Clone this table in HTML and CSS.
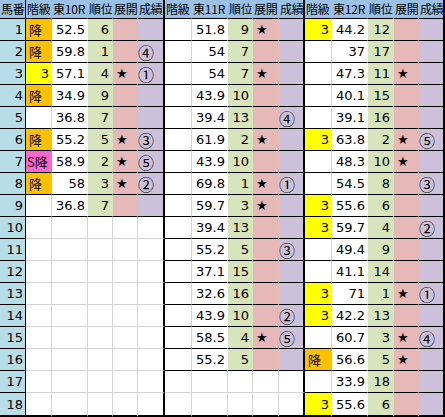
FILE: index.html
```html
<!DOCTYPE html>
<html lang="ja">
<head>
<meta charset="utf-8">
<title>馬番表</title>
<link rel="stylesheet" href="styles.css">
</head>
<body>
<table class="sheet">
<colgroup>
<col class="w-no">
<col class="w26"><col class="w36"><col class="w25"><col class="w25"><col class="w27">
<col class="w27"><col class="w36"><col class="w25"><col class="w26"><col class="w26">
<col class="w27"><col class="w36"><col class="w26"><col class="w25"><col class="w26">
</colgroup>
<thead>
<tr>
<th class="no">馬番</th>
<th>階級</th><th>東10R</th><th>順位</th><th>展開</th><th class="end">成績</th>
<th>階級</th><th>東11R</th><th>順位</th><th>展開</th><th class="end">成績</th>
<th>階級</th><th>東12R</th><th>順位</th><th>展開</th><th class="end">成績</th>
</tr>
</thead>
<tbody>
<tr>
<td class="no">1</td>
<td class="k x fo">降</td><td class="t x">52.5</td><td class="r">6</td><td class="d"></td><td class="s"></td>
<td class="k x"></td><td class="t x">51.8</td><td class="r">9</td><td class="d">★</td><td class="s"></td>
<td class="k x fy">3</td><td class="t x">44.2</td><td class="r">12</td><td class="d"></td><td class="s"></td>
</tr>
<tr>
<td class="no">2</td>
<td class="k x fo">降</td><td class="t x">59.8</td><td class="r">1</td><td class="d"></td><td class="s">④</td>
<td class="k x"></td><td class="t x">54</td><td class="r">7</td><td class="d"></td><td class="s"></td>
<td class="k x"></td><td class="t x">37</td><td class="r">17</td><td class="d"></td><td class="s"></td>
</tr>
<tr>
<td class="no">3</td>
<td class="k x fy">3</td><td class="t x">57.1</td><td class="r">4</td><td class="d">★</td><td class="s">①</td>
<td class="k x"></td><td class="t x">54</td><td class="r">7</td><td class="d">★</td><td class="s"></td>
<td class="k x"></td><td class="t x">47.3</td><td class="r">11</td><td class="d">★</td><td class="s"></td>
</tr>
<tr>
<td class="no">4</td>
<td class="k x fo">降</td><td class="t x">34.9</td><td class="r">9</td><td class="d"></td><td class="s"></td>
<td class="k x"></td><td class="t x">43.9</td><td class="r">10</td><td class="d"></td><td class="s"></td>
<td class="k x"></td><td class="t x">40.1</td><td class="r">15</td><td class="d"></td><td class="s"></td>
</tr>
<tr>
<td class="no">5</td>
<td class="k x"></td><td class="t x">36.8</td><td class="r">7</td><td class="d"></td><td class="s"></td>
<td class="k x"></td><td class="t x">39.4</td><td class="r">13</td><td class="d"></td><td class="s">④</td>
<td class="k x"></td><td class="t x">39.1</td><td class="r">16</td><td class="d"></td><td class="s"></td>
</tr>
<tr>
<td class="no">6</td>
<td class="k x fo">降</td><td class="t x">55.2</td><td class="r">5</td><td class="d">★</td><td class="s">③</td>
<td class="k x"></td><td class="t x">61.9</td><td class="r">2</td><td class="d">★</td><td class="s"></td>
<td class="k x fy">3</td><td class="t x">63.8</td><td class="r">2</td><td class="d">★</td><td class="s">⑤</td>
</tr>
<tr>
<td class="no">7</td>
<td class="k x fp">S降</td><td class="t x">58.9</td><td class="r">2</td><td class="d">★</td><td class="s">⑤</td>
<td class="k x"></td><td class="t x">43.9</td><td class="r">10</td><td class="d"></td><td class="s"></td>
<td class="k x"></td><td class="t x">48.3</td><td class="r">10</td><td class="d">★</td><td class="s"></td>
</tr>
<tr>
<td class="no">8</td>
<td class="k x fo">降</td><td class="t x">58</td><td class="r">3</td><td class="d">★</td><td class="s">②</td>
<td class="k x"></td><td class="t x">69.8</td><td class="r">1</td><td class="d">★</td><td class="s">①</td>
<td class="k x"></td><td class="t x">54.5</td><td class="r">8</td><td class="d"></td><td class="s">③</td>
</tr>
<tr>
<td class="no">9</td>
<td class="k x"></td><td class="t x">36.8</td><td class="r">7</td><td class="d"></td><td class="s"></td>
<td class="k x"></td><td class="t x">59.7</td><td class="r">3</td><td class="d">★</td><td class="s"></td>
<td class="k x fy">3</td><td class="t x">55.6</td><td class="r">6</td><td class="d"></td><td class="s"></td>
</tr>
<tr>
<td class="no">10</td>
<td></td><td></td><td></td><td></td><td class="end"></td>
<td class="k x"></td><td class="t x">39.4</td><td class="r">13</td><td class="d"></td><td class="s"></td>
<td class="k x fy">3</td><td class="t x">59.7</td><td class="r">4</td><td class="d"></td><td class="s">②</td>
</tr>
<tr>
<td class="no">11</td>
<td></td><td></td><td></td><td></td><td class="end"></td>
<td class="k x"></td><td class="t x">55.2</td><td class="r">5</td><td class="d"></td><td class="s">③</td>
<td class="k x"></td><td class="t x">49.4</td><td class="r">9</td><td class="d"></td><td class="s"></td>
</tr>
<tr>
<td class="no">12</td>
<td></td><td></td><td></td><td></td><td class="end"></td>
<td class="k x"></td><td class="t x">37.1</td><td class="r">15</td><td class="d"></td><td class="s"></td>
<td class="k x"></td><td class="t x">41.1</td><td class="r">14</td><td class="d"></td><td class="s"></td>
</tr>
<tr>
<td class="no">13</td>
<td></td><td></td><td></td><td></td><td class="end"></td>
<td class="k x"></td><td class="t x">32.6</td><td class="r">16</td><td class="d"></td><td class="s"></td>
<td class="k x fy">3</td><td class="t x">71</td><td class="r">1</td><td class="d">★</td><td class="s">①</td>
</tr>
<tr>
<td class="no">14</td>
<td></td><td></td><td></td><td></td><td class="end"></td>
<td class="k x"></td><td class="t x">43.9</td><td class="r">10</td><td class="d"></td><td class="s">②</td>
<td class="k x fy">3</td><td class="t x">42.2</td><td class="r">13</td><td class="d"></td><td class="s"></td>
</tr>
<tr>
<td class="no">15</td>
<td></td><td></td><td></td><td></td><td class="end"></td>
<td class="k x"></td><td class="t x">58.5</td><td class="r">4</td><td class="d">★</td><td class="s">⑤</td>
<td class="k x"></td><td class="t x">60.7</td><td class="r">3</td><td class="d">★</td><td class="s">④</td>
</tr>
<tr>
<td class="no">16</td>
<td></td><td></td><td></td><td></td><td class="end"></td>
<td class="k x"></td><td class="t x">55.2</td><td class="r">5</td><td class="d"></td><td class="s"></td>
<td class="k x fo">降</td><td class="t x">56.6</td><td class="r">5</td><td class="d">★</td><td class="s"></td>
</tr>
<tr>
<td class="no">17</td>
<td></td><td></td><td></td><td></td><td class="end"></td>
<td></td><td></td><td></td><td></td><td class="end"></td>
<td class="k x"></td><td class="t x">33.9</td><td class="r">18</td><td class="d"></td><td class="s"></td>
</tr>
<tr class="last">
<td class="no">18</td>
<td></td><td></td><td></td><td></td><td class="end"></td>
<td></td><td></td><td></td><td></td><td class="end"></td>
<td class="k x fy">3</td><td class="t x">55.6</td><td class="r">6</td><td class="d"></td><td class="s"></td>
</tr>
</tbody>
</table>
</body>
</html>
```

FILE: styles.css
```css
html, body {
  margin: 0;
  padding: 0;
  background: #ffffff;
}

.sheet {
  border-collapse: separate;
  border-spacing: 0;
  table-layout: fixed;
  width: 445px;
  font-family: "DejaVu Sans", "Noto Sans CJK JP", sans-serif;
  font-size: 13px;
  color: #000;
}

.w-no { width: 26px; }
.w25 { width: 25px; }
.w26 { width: 26px; }
.w27 { width: 27px; }
.w36 { width: 36px; }

.sheet th,
.sheet td {
  box-sizing: border-box;
  padding: 0 2px;
  white-space: nowrap;
  overflow: hidden;
  line-height: 1;
  border-right: 1px solid #d4d4d4;
  border-bottom: 1px solid #d4d4d4;
}

.sheet th {
  height: 19px;
  background: #9bc2e6;
  font-family: "Noto Sans CJK JP", sans-serif;
  font-weight: normal;
  font-size: 12px;
  text-align: left;
  padding: 0 0 0 1px;
  letter-spacing: -0.2px;
  border-right-color: transparent;
  border-bottom-color: #000;
}

.sheet td {
  height: 22px;
}

.sheet .no {
  background: #b7dee8;
  text-align: right;
  border-right: 1px solid #000;
  border-bottom-color: #000;
}

.sheet th.no {
  background: #9bc2e6;
  text-align: left;
}

.sheet .x,
.sheet .r,
.sheet .d,
.sheet .s {
  border-bottom-color: #000;
}

.sheet .k {
  text-align: right;
}

.sheet .fo,
.sheet .fp {
  text-align: left;
  padding-left: 3px;
  font-family: "Noto Sans CJK JP", sans-serif;
}

.sheet .fp {
  padding-left: 1px;
}

.sheet .fo { background: #ffc000; border-right-color: transparent; }
.sheet .fy { background: #ffff00; border-right-color: transparent; }
.sheet .fp { background: #ff66cc; border-right-color: transparent; }

.sheet .t {
  text-align: right;
  border-right-color: transparent;
}

.sheet .r {
  background: #d8e4bc;
  text-align: right;
  padding-right: 3px;
  border-right-color: transparent;
}

.sheet .d {
  background: #e6b8b7;
  text-align: left;
  padding-left: 3px;
  border-right-color: transparent;
}

.sheet .s {
  background: #ccc0da;
  text-align: left;
  padding-left: 0;
  font-size: 16px;
  font-family: "Noto Sans CJK JP", sans-serif;
}

.sheet .s,
.sheet .end {
  border-right: 2px solid #000;
}

.sheet tr.last td {
  height: 24px;
  border-bottom: 2px solid #000;
}
```
